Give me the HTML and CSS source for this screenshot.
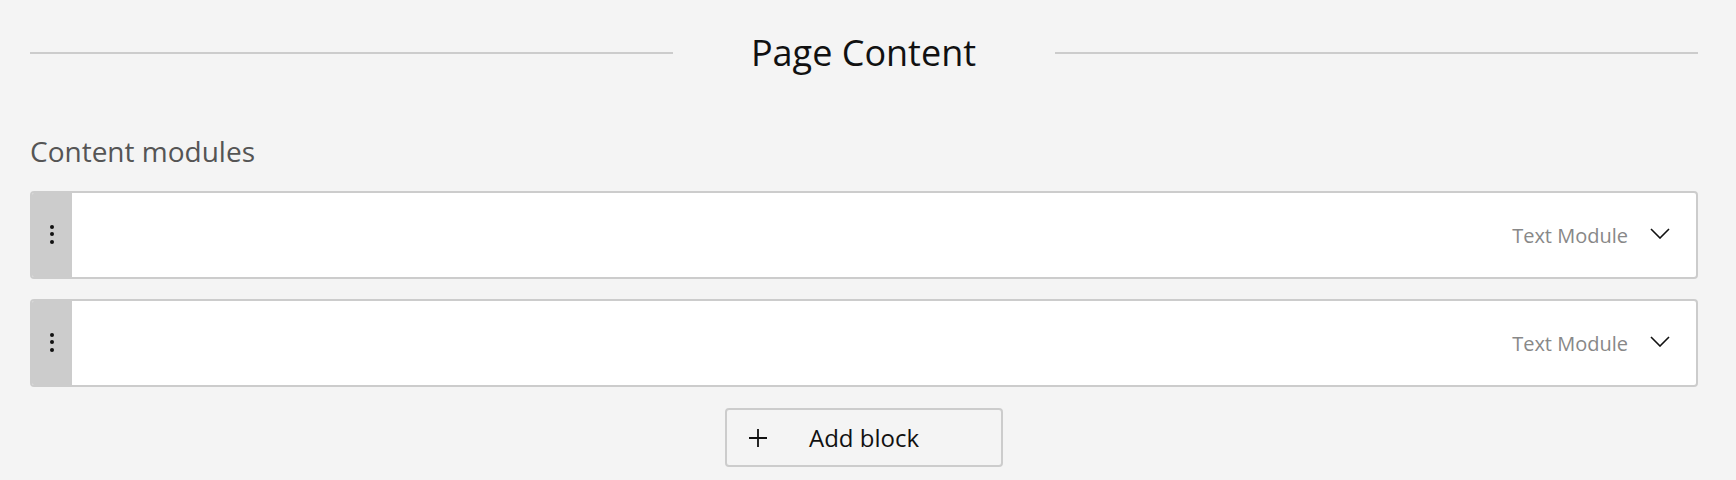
FILE: index.html
```html
<!DOCTYPE html>
<html lang="en">
<head>
    <meta charset="UTF-8">
    <meta name="viewport" content="width=device-width, initial-scale=1.0">
    <title>Page Content</title>
    <link rel="stylesheet" href="styles.css">
</head>
<body>
    <div class="page">
        <div class="section-title">
            <span class="rule"></span>
            <h2>Page Content</h2>
            <span class="rule"></span>
        </div>

        <p class="label">Content modules</p>

        <div class="modules">
            <div class="module">
                <div class="handle">
                    <span class="dot"></span><span class="dot"></span><span class="dot"></span>
                </div>
                <div class="module-body">
                    <span class="module-type">Text Module</span>
                    <svg class="chevron" width="20" height="11" viewBox="0 0 20 11">
                        <path d="M1 1 L10 10 L19 1" fill="none" stroke="#111" stroke-width="1.6"/>
                    </svg>
                </div>
            </div>
            <div class="module">
                <div class="handle">
                    <span class="dot"></span><span class="dot"></span><span class="dot"></span>
                </div>
                <div class="module-body">
                    <span class="module-type">Text Module</span>
                    <svg class="chevron" width="20" height="11" viewBox="0 0 20 11">
                        <path d="M1 1 L10 10 L19 1" fill="none" stroke="#111" stroke-width="1.6"/>
                    </svg>
                </div>
            </div>
        </div>

        <div class="actions">
            <button class="add-block">
                <svg width="20" height="20" viewBox="0 0 20 20">
                    <path d="M10 1 V19 M1 10 H19" fill="none" stroke="#111" stroke-width="1.8"/>
                </svg>
                <span>Add block</span>
            </button>
        </div>
    </div>
</body>
</html>
```

FILE: styles.css
```css
body {
    margin: 0;
    background: #f4f4f4;
    font-family: "Open Sans", "Noto Sans", sans-serif;
    color: #111;
}

.page {
    padding: 28px 38px 0 30px;
}

/* titulo con lineas a los lados */
.section-title {
    display: flex;
    align-items: center;
}
.section-title .rule {
    flex: 1;
    height: 2px;
    background: #cccccc;
}
.section-title h2 {
    margin: 0 79px 0 78px;
    font-size: 36px;
    font-weight: 400;
    line-height: 49px;
}

.label {
    margin: 55px 0 21px 0;
    font-size: 28px;
    line-height: 38px;
    color: #555;
}

.modules {
    display: flex;
    flex-direction: column;
    gap: 20px;
}

.module {
    display: flex;
    height: 84px;
    border: 2px solid #cccccc;
    border-radius: 4px;
    background: #fff;
    overflow: hidden;
}

.handle {
    width: 40px;
    background: #cccccc;
    display: flex;
    flex-direction: column;
    align-items: center;
    justify-content: center;
    gap: 3.5px;
    padding-bottom: 2px;
}
.dot {
    width: 4px;
    height: 4px;
    border-radius: 50%;
    background: #111;
}

.module-body {
    flex: 1;
    display: flex;
    align-items: center;
    justify-content: flex-end;
    padding-right: 26px;
}
.module-type {
    font-size: 20px;
    color: #888;
    margin-right: 22px;
}
.chevron {
    display: block;
    margin-bottom: 3px;
}

.actions {
    display: flex;
    justify-content: center;
    margin-top: 21px;
}

.add-block {
    width: 278px;
    height: 59px;
    display: flex;
    align-items: center;
    gap: 41px;
    padding: 0 0 0 21px;
    border: 2px solid #cccccc;
    border-radius: 4px;
    background: #f4f4f4;
    font-family: "Open Sans", "Noto Sans", sans-serif;
    font-size: 24px;
    color: #111;
    cursor: pointer;
}
.add-block svg {
    display: block;
}
```
